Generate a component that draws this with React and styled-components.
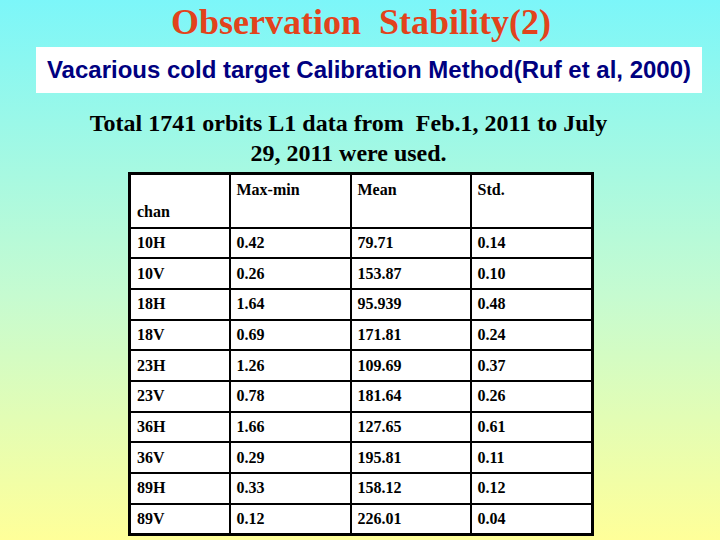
import styled, { createGlobalStyle } from 'styled-components';

const GlobalStyle = createGlobalStyle`
  html, body { margin: 0; padding: 0; }
`;

const rows = [
  ['10H', '0.42', '79.71', '0.14'],
  ['10V', '0.26', '153.87', '0.10'],
  ['18H', '1.64', '95.939', '0.48'],
  ['18V', '0.69', '171.81', '0.24'],
  ['23H', '1.26', '109.69', '0.37'],
  ['23V', '0.78', '181.64', '0.26'],
  ['36H', '1.66', '127.65', '0.61'],
  ['36V', '0.29', '195.81', '0.11'],
  ['89H', '0.33', '158.12', '0.12'],
  ['89V', '0.12', '226.01', '0.04'],
];

const Slide = styled.div`
  width: 720px;
  height: 540px;
  overflow: hidden;
  background: linear-gradient(to bottom, #7cf6f9 0%, #c6fbd0 55%, #ffff99 100%);
  display: flex;
  flex-direction: column;
  align-items: center;
`;

const Title = styled.h1`
  margin: 0 0 0 2px;
  padding-top: 1px;
  height: 46px;
  font-family: "Liberation Serif", serif;
  font-weight: bold;
  font-size: 36px;
  line-height: 42px;
  color: #e2431c;
  white-space: pre;
`;

const Banner = styled.div`
  width: 666px;
  height: 46px;
  margin-left: 18px;
  background: #fff;
  display: flex;
  align-items: center;
  justify-content: center;
  font-family: "Liberation Sans", sans-serif;
  font-weight: bold;
  font-size: 24px;
  color: #000080;
`;

const Intro = styled.p`
  margin: 15px 0 0 -23px;
  text-align: center;
  font-family: "Liberation Serif", serif;
  font-weight: bold;
  font-size: 24px;
  line-height: 30px;
  white-space: pre;
  color: #000;
`;

const Table = styled.table`
  margin: 4px 0 0 2px;
  border-collapse: collapse;
  background: #fff;
  border: 3px solid #000;
  font-family: "Liberation Serif", serif;
  font-weight: bold;
  font-size: 16px;
  color: #000;
`;

const Cell = styled.td`
  border: 2px solid #000;
  padding: 0 6px;
  height: 30.7px;
  width: ${p => p.$w}px;
  vertical-align: ${p => p.$align || 'middle'};
  box-sizing: border-box;
`;

const HeadRow = styled.tr`
  height: 54px;
`;

const HeadCell = styled(Cell)`
  padding-top: ${p => (p.$align === 'top' ? '6px' : '0')};
  padding-bottom: ${p => (p.$align === 'bottom' ? '6px' : '0')};
`;

const widths = [100, 121, 120, 122];

export default function App() {
  return (
    <>
      <GlobalStyle />
      <Slide>
        <Title>Observation  Stability(2)</Title>
        <Banner>Vacarious cold target Calibration Method(Ruf et al, 2000)</Banner>
        <Intro>
          Total 1741 orbits L1 data from  Feb.1, 2011 to July
          <br />
          29, 2011 were used.
        </Intro>
        <Table>
          <tbody>
            <HeadRow>
              <HeadCell $w={widths[0]} $align="bottom">chan</HeadCell>
              <HeadCell $w={widths[1]} $align="top">Max-min</HeadCell>
              <HeadCell $w={widths[2]} $align="top">Mean</HeadCell>
              <HeadCell $w={widths[3]} $align="top">Std.</HeadCell>
            </HeadRow>
            {rows.map(r => (
              <tr key={r[0]}>
                {r.map((v, i) => (
                  <Cell key={i} $w={widths[i]}>{v}</Cell>
                ))}
              </tr>
            ))}
          </tbody>
        </Table>
      </Slide>
    </>
  );
}
